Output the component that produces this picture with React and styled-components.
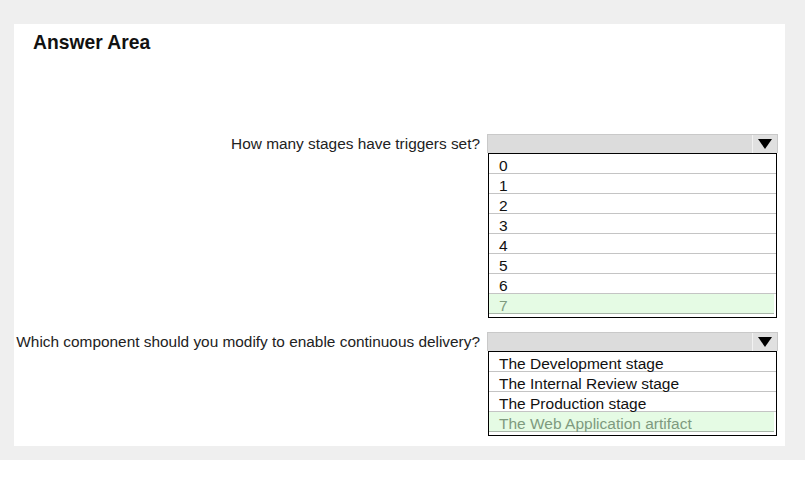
import React from 'react'
import styled, { createGlobalStyle } from 'styled-components'

const GlobalStyle = createGlobalStyle`
  body {
    margin: 0;
    background: #ffffff;
    font-family: "Liberation Sans", Arial, sans-serif;
  }
`

const Page = styled.div`
  background: #efefef;
  height: 460px;
  padding: 24px 20px 0 14px;
  box-sizing: border-box;
`

const Panel = styled.div`
  background: #ffffff;
  width: 771px;
  height: 422px;
  box-sizing: border-box;
  padding-top: 8px;
`

const Title = styled.h2`
  margin: 0 0 0 19px;
  font-size: 19.3px;
  line-height: 22px;
  font-weight: 700;
  color: #111;
`

const Questions = styled.div`
  display: grid;
  grid-template-columns: 466px 291px;
  column-gap: 7px;
  row-gap: 14px;
  margin-top: 80px;
`

const Label = styled.div`
  text-align: right;
  font-size: 15.4px;
  line-height: 19px;
  color: #222;
  white-space: nowrap;
`

const Dropdown = styled.div`
  display: flex;
  flex-direction: column;
`

const SelectBox = styled.div`
  display: flex;
  height: 19px;
  box-sizing: border-box;
  border: 1px solid #c9c9c9;
  border-bottom: none;
  background: #dcdcdc;
`

const SelectValue = styled.div`
  flex: 1;
`

const ArrowButton = styled.div`
  width: 24px;
  display: flex;
  align-items: center;
  justify-content: center;
  border-left: 1px solid #f2f2f2;
  background: #e0e0e0;
`

const List = styled.ul`
  list-style: none;
  margin: 0 0 0 1px;
  padding: 0 0 ${({ $pad }) => $pad}px 0;
  width: 289px;
  box-sizing: border-box;
  border: 1px solid #000;
`

const Item = styled.li`
  height: 20px;
  box-sizing: border-box;
  padding: 3px 0 0 10px;
  font-size: 15.5px;
  line-height: 17px;
  color: ${({ $selected }) => ($selected ? '#7e9a7e' : '#111')};
  background: ${({ $selected }) => ($selected ? '#e5fbe4' : '#fff')};
  border-bottom: 1px solid ${({ $selected }) => ($selected ? '#a9b5a9' : '#c4c4c4')};
  margin-right: ${({ $selected }) => ($selected ? '2px' : '0')};
  white-space: nowrap;
  &:last-child {
    border-bottom: ${({ $selected }) => ($selected ? '1px solid #a9b5a9' : 'none')};
  }
`

function Arrow() {
  return (
    <svg width="14" height="10" viewBox="0 0 14 10">
      <polygon points="0,0 14,0 7,10" fill="#000" />
    </svg>
  )
}

function Question({ label, options, selected, pad }) {
  return (
    <>
      <Label>{label}</Label>
      <Dropdown>
        <SelectBox>
          <SelectValue />
          <ArrowButton>
            <Arrow />
          </ArrowButton>
        </SelectBox>
        <List $pad={pad}>
          {options.map((o) => (
            <Item key={o} $selected={o === selected}>
              {o}
            </Item>
          ))}
        </List>
      </Dropdown>
    </>
  )
}

export default function App() {
  return (
    <>
      <GlobalStyle />
      <Page>
        <Panel>
          <Title>Answer Area</Title>
          <Questions>
            <Question
              label="How many stages have triggers set?"
              options={['0', '1', '2', '3', '4', '5', '6', '7']}
              selected="7"
              pad={3}
            />
            <Question
              label="Which component should you modify to enable continuous delivery?"
              options={[
                'The Development stage',
                'The Internal Review stage',
                'The Production stage',
                'The Web Application artifact',
              ]}
              selected="The Web Application artifact"
              pad={3}
            />
          </Questions>
        </Panel>
      </Page>
    </>
  )
}
